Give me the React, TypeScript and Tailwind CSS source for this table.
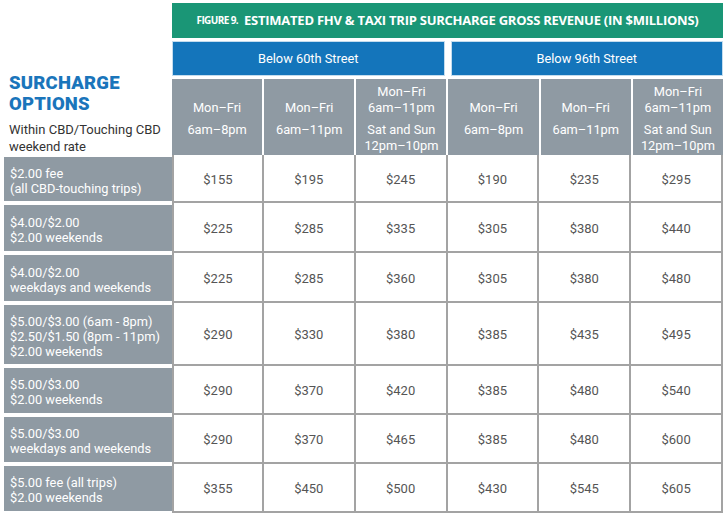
import React from "react"

const headers: string[][][] = [
  [["Mon–Fri"], ["6am–8pm"]],
  [["Mon–Fri"], ["6am–11pm"]],
  [["Mon–Fri", "6am–11pm"], ["Sat and Sun", "12pm–10pm"]],
  [["Mon–Fri"], ["6am–8pm"]],
  [["Mon–Fri"], ["6am–11pm"]],
  [["Mon–Fri", "6am–11pm"], ["Sat and Sun", "12pm–10pm"]],
]

const rows = [
  { label: ["$2.00 fee", "(all CBD-touching trips)"], values: [155, 195, 245, 190, 235, 295], h: "h-[48px]" },
  { label: ["$4.00/$2.00", "$2.00 weekends"], values: [225, 285, 335, 305, 380, 440], h: "h-[50px]" },
  { label: ["$4.00/$2.00", "weekdays and weekends"], values: [225, 285, 360, 305, 380, 480], h: "h-[50px]" },
  {
    label: ["$5.00/$3.00 (6am - 8pm)", "$2.50/$1.50 (8pm - 11pm)", "$2.00 weekends"],
    values: [290, 330, 380, 385, 435, 495],
    h: "h-[63px]",
  },
  { label: ["$5.00/$3.00", "$2.00 weekends"], values: [290, 370, 420, 385, 480, 540], h: "h-[49px]" },
  { label: ["$5.00/$3.00", "weekdays and weekends"], values: [290, 370, 465, 385, 480, 600], h: "h-[49px]" },
  { label: ["$5.00 fee (all trips)", "$2.00 weekends"], values: [355, 450, 500, 430, 545, 605], h: "h-[49px]" },
]

export default function App() {
  return (
    <div className="w-[726px] h-[516px] bg-white pl-[4px] font-['Roboto',sans-serif] overflow-hidden">
      {/* Header */}
      <div className="flex w-[719px]">
        <div className="w-[168px] pl-[5px] pt-[73px]">
          <div className="text-[18.5px] leading-[21px] font-black text-[#1a75bb] tracking-[0.2px]">
            SURCHARGE
            <br />
            OPTIONS
          </div>
          <div className="mt-[6px] text-[13px] leading-[17px] text-[#333]">
            Within CBD/Touching CBD
            <br />
            weekend rate
          </div>
        </div>
        <div className="flex-1 flex flex-col">
          <div className="mt-[3px] h-[35px] bg-[#1a9676] flex items-center justify-center text-white font-bold text-[13px] tracking-[-0.25px] whitespace-nowrap font-['Open_Sans',sans-serif]">
            <span className="text-[10px] tracking-[-0.6px] mr-[6px]">FIGURE 9.</span>
            ESTIMATED FHV &amp; TAXI TRIP SURCHARGE GROSS REVENUE (IN $MILLIONS)
          </div>
          <div className="mt-[3px] h-[35px] flex gap-[6px]">
            <div className="flex-1 bg-[#1475bb] border border-[#c3dcee] flex items-center justify-center text-white text-[12.8px]">
              Below 60th Street
            </div>
            <div className="flex-1 bg-[#1475bb] border border-[#c3dcee] flex items-center justify-center text-white text-[12.8px]">
              Below 96th Street
            </div>
          </div>
          <div className="mt-[3px] h-[76px] grid grid-cols-6 gap-x-[2px]">
            {headers.map((groups, i) => (
              <div key={i} className="bg-[#8f9aa3] pt-[3px] flex flex-col items-center justify-center gap-[6px] text-white text-[12.8px] leading-[16px] text-center">
                {groups.map((g, j) => (
                  <div key={j}>
                    {g.map((line) => (
                      <div key={line}>{line}</div>
                    ))}
                  </div>
                ))}
              </div>
            ))}
          </div>
        </div>
      </div>

      {/* Body */}
      <div className="w-[719px]">
        {rows.map((r, i) => (
          <div key={i} className={`grid grid-cols-[168px_repeat(6,1fr)] ${r.h}`}>
            <div className="my-[2px] pt-[3px] bg-[#8f9aa3] flex flex-col justify-center pl-[6px] text-white text-[12.8px] leading-[15px]">
              {r.label.map((l) => (
                <div key={l}>{l}</div>
              ))}
            </div>
            {r.values.map((v, j) => (
              <div
                key={j}
                className={`pt-[3px] flex items-center justify-center border-r-2 border-b-2 border-[#a3a3a3] text-[13px] text-[#555] ${
                  j === 0 ? "border-l-2" : ""
                }`}
              >
                ${v}
              </div>
            ))}
          </div>
        ))}
      </div>
    </div>
  )
}
